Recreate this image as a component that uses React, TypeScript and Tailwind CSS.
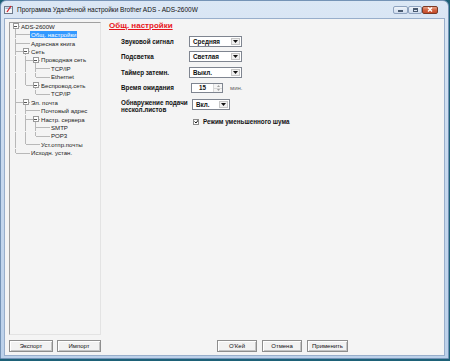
import React from "react"

type Row = { label: string; level: number; kids?: boolean; last?: boolean; sel?: boolean; rails: boolean[] }

const ROW_H = 8.45

const rows: Row[] = [
  { label: "ADS-2600W", level: 0, kids: true, last: true, rails: [] },
  { label: "Общ. настройки", level: 1, sel: true, rails: [] },
  { label: "Адресная книга", level: 1, rails: [] },
  { label: "Сеть", level: 1, kids: true, rails: [] },
  { label: "Проводная сеть", level: 2, kids: true, rails: [true] },
  { label: "TCP/IP", level: 3, rails: [true, true] },
  { label: "Ethernet", level: 3, last: true, rails: [true, true] },
  { label: "Беспровод.сеть", level: 2, kids: true, last: true, rails: [true] },
  { label: "TCP/IP", level: 3, last: true, rails: [true, false] },
  { label: "Эл. почта", level: 1, kids: true, rails: [] },
  { label: "Почтовый адрес", level: 2, rails: [true] },
  { label: "Настр. сервера", level: 2, kids: true, rails: [true] },
  { label: "SMTP", level: 3, rails: [true, true] },
  { label: "POP3", level: 3, last: true, rails: [true, true] },
  { label: "Уст.отпр.почты", level: 2, last: true, rails: [true] },
  { label: "Исходн. устан.", level: 1, last: true, rails: [] },
]

const LINE = "#b8b8b8"

// one 10px gutter cell of the tree, drawn as a tiny svg
const Cell = ({ kind, last, kids, root }: { kind: "rail" | "joint" | "self" | "none"; last?: boolean; kids?: boolean; root?: boolean }) => {
  const c = ROW_H / 2
  return (
    <svg width={10} height={ROW_H} className="shrink-0" shapeRendering="crispEdges">
      {kind === "rail" && <line x1={5.5} y1={0} x2={5.5} y2={ROW_H} stroke={LINE} />}
      {kind === "joint" && (
        <>
          <line x1={5.5} y1={0} x2={5.5} y2={last ? c : ROW_H} stroke={LINE} />
          <line x1={5.5} y1={c} x2={10} y2={c} stroke={LINE} />
        </>
      )}
      {kind === "self" && (
        <>
          {!root && <line x1={0} y1={c} x2={10} y2={c} stroke={LINE} />}
          {root && <line x1={5.5} y1={c} x2={10} y2={c} stroke={LINE} />}
          {kids && (
            <>
              <line x1={5.5} y1={c} x2={5.5} y2={ROW_H} stroke={LINE} />
              <rect x={3} y={c - 2.5} width={5} height={5} fill="#fff" stroke="#9a9a9a" />
              <line x1={4} y1={c} x2={7} y2={c} stroke="#555" />
            </>
          )}
        </>
      )}
    </svg>
  )
}

const TreeRow = ({ row }: { row: Row }) => {
  const cells: React.ReactNode[] = []
  for (let k = 0; k < row.level - 1; k++) {
    cells.push(<Cell key={"r" + k} kind={row.rails[k] ? "rail" : "none"} />)
  }
  if (row.level > 0) cells.push(<Cell key="j" kind="joint" last={row.last} />)
  cells.push(<Cell key="s" kind="self" kids={row.kids} root={row.level === 0} />)
  return (
    <div className="flex items-center" style={{ height: ROW_H }}>
      {cells}
      <span
        className={
          "px-[1px] leading-[7px] whitespace-nowrap " +
          (row.sel ? "bg-[#3399ff] text-white" : "text-[#222]")
        }
      >
        {row.label}
      </span>
    </div>
  )
}

const Combo = ({ value, w }: { value: string; w: string }) => (
  <div className={"h-[11px] flex items-stretch bg-white border border-[#7f8590] " + w}>
    <span className="flex-1 pl-[3px] leading-[9px] font-bold text-[#111]">{value}</span>
    <span className="w-[9px] m-[1px] bg-[#f0f0f0] border border-[#c6c6c6] flex items-center justify-center">
      <svg width={5} height={3}><path d="M0 0 H5 L2.5 3 Z" fill="#111" /></svg>
    </span>
  </div>
)

const Btn = ({ label, w }: { label: string; w: string }) => (
  <button
    type="button"
    className={
      "h-[12px] bg-[#f2f2f2] border border-[#8e8e8e] shadow-[inset_1px_1px_0_#ffffff,inset_-1px_-1px_0_#c4c4c4] text-[6px] leading-[10px] text-[#111] " +
      w
    }
  >
    {label}
  </button>
)

export default function App() {
  return (
    <div className="w-[450px] h-[361px] bg-[#1d6177] text-[6px] leading-[8px] font-['Liberation_Sans',Arial,sans-serif]">
      <div className="w-[449px] h-[359px] rounded-t-[6px] border border-[#7593b6] bg-gradient-to-b from-[#dbe7f5] via-[#c6d8ee] to-[#bcd1ea] flex flex-col">
        {/* title bar */}
        <div className="h-[17px] shrink-0 flex items-center pl-[3px] pr-[10px]">
          <svg width={10} height={10} className="shrink-0">
            <rect x={0.5} y={1.5} width={8} height={7} fill="#f4f6f8" stroke="#6d7b8c" />
            <rect x={1.5} y={2.5} width={6} height={1.5} fill="#9cb3cf" />
            <path d="M7 1 L3 7" stroke="#d4202a" strokeWidth={1.3} />
          </svg>
          <span className="ml-[3px] text-[6.5px] text-[#111] whitespace-nowrap">
            Программа Удалённой настройки Brother ADS - ADS-2600W
          </span>
          <div className="ml-auto flex items-center">
            <div className="w-[15px] h-[8px] rounded-[2px] border border-[#8fa3bf] bg-gradient-to-b from-[#eef3fa] to-[#cfdcee] flex items-end justify-center pb-[1px]">
              <div className="w-[5px] h-[2px] bg-[#4a5b72]" />
            </div>
            <div className="w-[14px] h-[8px] rounded-[2px] border border-[#8fa3bf] bg-gradient-to-b from-[#eef3fa] to-[#cfdcee] flex items-center justify-center">
              <div className="w-[5px] h-[4px] border border-[#4a5b72] border-t-2" />
            </div>
            <div className="w-[16px] h-[8px] rounded-[2px] border border-[#7a3a26] bg-gradient-to-b from-[#e8a48a] via-[#d0613f] to-[#c54a2a] flex items-center justify-center">
              <svg width={6} height={5}><path d="M1 0.5 L5 4.5 M5 0.5 L1 4.5" stroke="#fff" strokeWidth={1.4} /></svg>
            </div>
          </div>
        </div>

        {/* client area */}
        <div className="mx-[3px] mb-[2px] flex-1 bg-[#f4f4f4] border border-[#98aecb] flex flex-col">
          <div className="flex">
            {/* tree */}
            <div className="ml-[4px] mt-[3px] w-[92px] h-[313px] border-t border-l border-[#a0a0a0] border-r border-r-[#e3e3e3] border-b border-b-[#e3e3e3] text-[6.1px] overflow-hidden">
              <div className="-mt-[1px]">
                {rows.map((r, i) => (
                  <TreeRow key={i} row={r} />
                ))}
              </div>
            </div>

            {/* settings pane */}
            <div className="pl-[8px] pt-[2px] flex flex-col">
              <span className="text-[8px] leading-[10px] font-bold text-[#e8141b] underline">Общ. настройки</span>
              <div className="ml-[12px] mt-[5px] flex flex-col text-[6.3px] font-bold text-[#111]">
                <div className="flex items-center h-[11px]">
                  <span className="w-[68px]">Звуковой сигнал</span>
                  <Combo value="Средняя" w="w-[53px]" />
                </div>
                <div className="flex items-center h-[11px] mt-[4px]">
                  <span className="w-[68px]">Подсветка</span>
                  <Combo value="Светлая" w="w-[53px]" />
                </div>
                <div className="flex items-center h-[11px] mt-[5px]">
                  <span className="w-[68px]">Таймер затемн.</span>
                  <Combo value="Выкл." w="w-[53px]" />
                </div>
                <div className="flex items-center h-[10px] mt-[5px]">
                  <span className="w-[70px]">Время ожидания</span>
                  <div className="flex h-[10px] w-[32px] bg-white border border-[#7f8590]">
                    <span className="w-[21px] text-center leading-[8px]">15</span>
                    <span className="flex-1 flex flex-col border-l border-[#d8d8d8] bg-[#f4f4f4]">
                      <span className="flex-1 flex items-center justify-center border-b border-[#d8d8d8]">
                        <svg width={3} height={2}><path d="M0 2 H3 L1.5 0 Z" fill="#a0a0a0" /></svg>
                      </span>
                      <span className="flex-1 flex items-center justify-center">
                        <svg width={3} height={2}><path d="M0 0 H3 L1.5 2 Z" fill="#a0a0a0" /></svg>
                      </span>
                    </span>
                  </div>
                  <span className="ml-[7px] text-[6px] font-normal text-[#666]">мин.</span>
                </div>
                <div className="flex items-start mt-[6px]">
                  <span className="w-[71px] leading-[7.3px]">
                    Обнаружение подачи
                    <br />
                    нескол.листов
                  </span>
                  <Combo value="Вкл." w="w-[38px]" />
                </div>
                <div className="flex items-center mt-[4px] ml-[72px]">
                  <div className="w-[6px] h-[6px] border border-[#8a8a8a] bg-white flex items-center justify-center">
                    <svg width={5} height={5}><path d="M0.5 2.5 L2 4 L4.5 0.8" stroke="#111" strokeWidth={1} fill="none" /></svg>
                  </div>
                  <span className="ml-[4px]">Режим уменьшенного шума</span>
                </div>
              </div>
            </div>
          </div>

          {/* buttons */}
          <div className="mt-[5px] flex items-center pl-[4px]">
            <Btn label="Экспорт" w="w-[44px]" />
            <div className="ml-[4px] flex">
              <Btn label="Импорт" w="w-[44px]" />
            </div>
            <div className="ml-[116px] flex gap-[5px]">
              <Btn label="O'Кей" w="w-[40px]" />
              <Btn label="Отмена" w="w-[40px]" />
              <Btn label="Применить" w="w-[41px]" />
            </div>
          </div>
        </div>
      </div>
    </div>
  )
}
